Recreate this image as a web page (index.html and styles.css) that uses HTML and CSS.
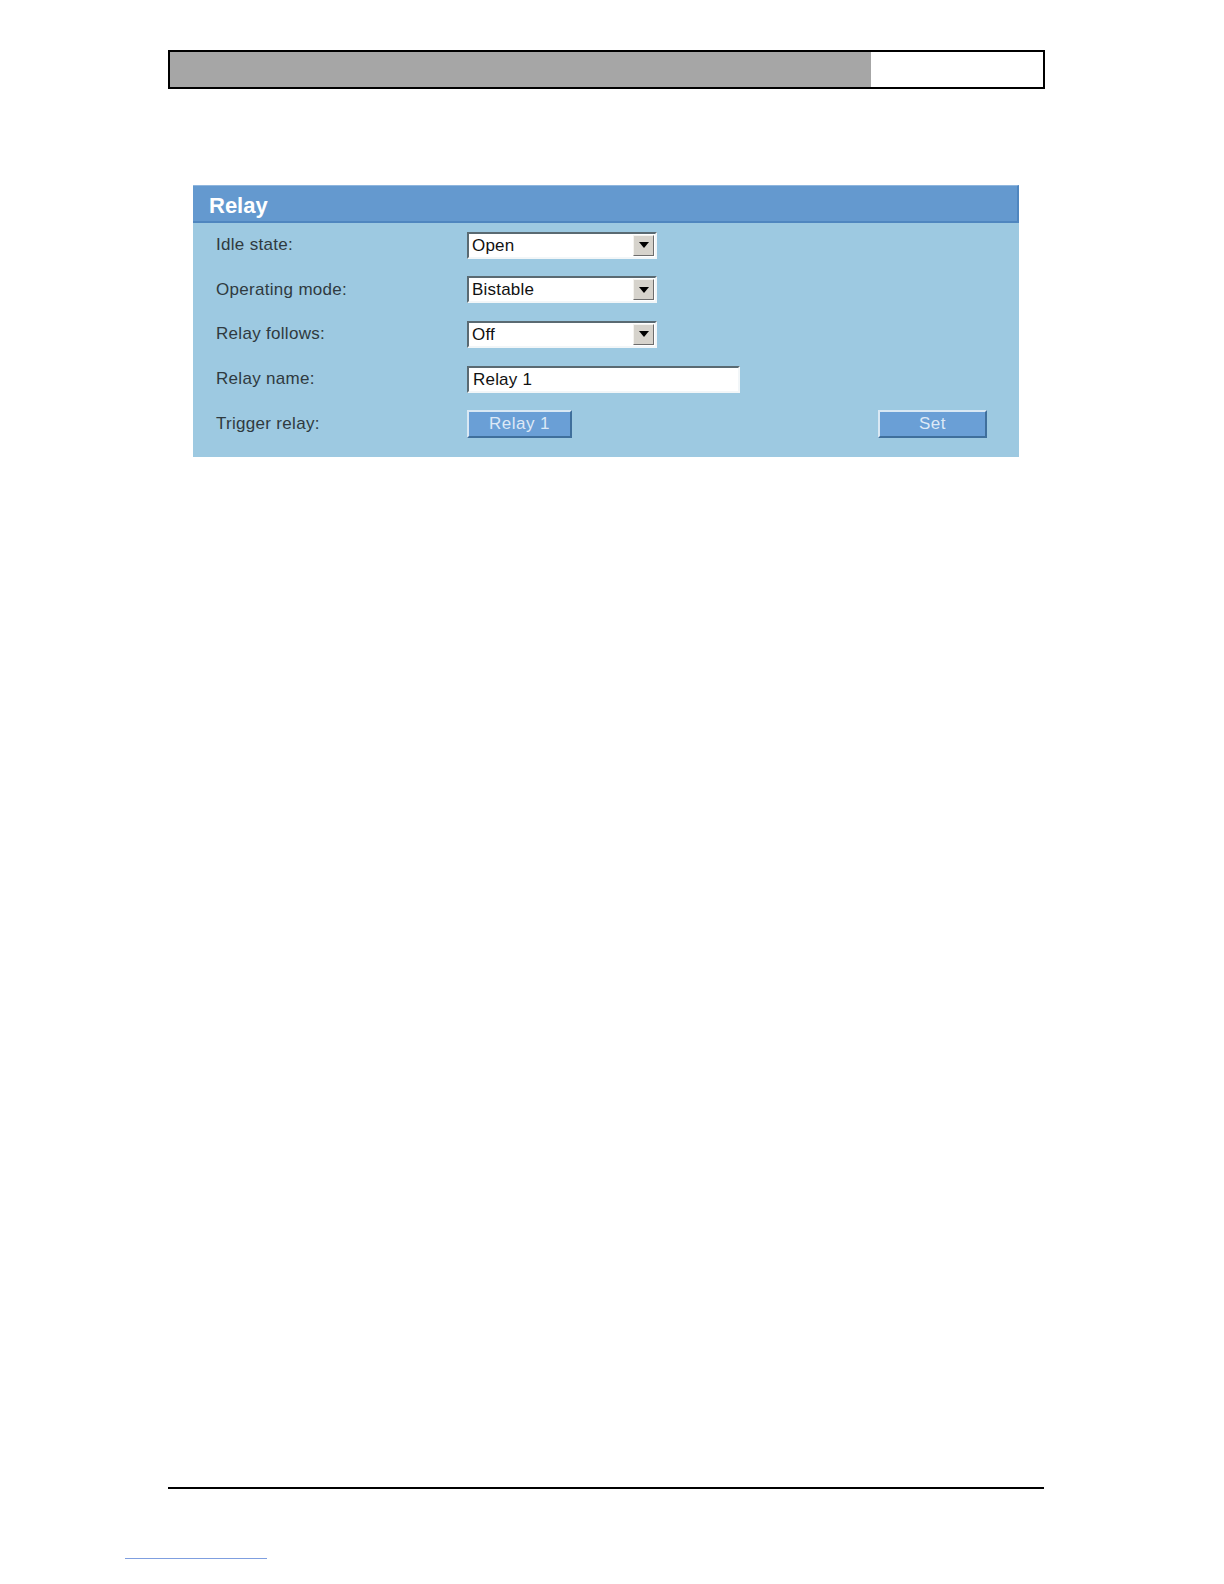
FILE: index.html
```html
<!DOCTYPE html>
<html>
<head>
<meta charset="utf-8">
<link rel="stylesheet" href="styles.css">
</head>
<body>
<div class="page">
  <div class="topbar"><div class="topbar-fill"></div><div class="topbar-blank"></div></div>
  <div class="panel">
    <div class="panel-head">Relay</div>
    <div class="panel-body">
      <div class="row">
        <div class="label">Idle state:</div>
        <div class="select"><span class="sel-text">Open</span><span class="sel-btn"><svg width="10" height="6" viewBox="0 0 10 6"><path d="M0 0H10L5 6Z" fill="#000"/></svg></span></div>
      </div>
      <div class="row">
        <div class="label">Operating mode:</div>
        <div class="select"><span class="sel-text">Bistable</span><span class="sel-btn"><svg width="10" height="6" viewBox="0 0 10 6"><path d="M0 0H10L5 6Z" fill="#000"/></svg></span></div>
      </div>
      <div class="row">
        <div class="label">Relay follows:</div>
        <div class="select"><span class="sel-text">Off</span><span class="sel-btn"><svg width="10" height="6" viewBox="0 0 10 6"><path d="M0 0H10L5 6Z" fill="#000"/></svg></span></div>
      </div>
      <div class="row">
        <div class="label">Relay name:</div>
        <div class="textinput">Relay 1</div>
      </div>
      <div class="row">
        <div class="label">Trigger relay:</div>
        <div class="btn btn-relay">Relay 1</div>
        <div class="spacer"></div>
        <div class="btn btn-set">Set</div>
      </div>
    </div>
  </div>
  <div class="footer-line"></div>
  <div class="link-line"></div>
</div>
</body>
</html>
```
FILE: styles.css
```css
html, body { margin: 0; padding: 0; background: #fff; overflow: hidden; }
body { font-family: "Liberation Sans", Arial, sans-serif; }
.page { width: 1224px; height: 1584px; padding-top: 50px; box-sizing: border-box; overflow: hidden; }
.topbar {
  margin-left: 168px; width: 877px; height: 39px; box-sizing: border-box;
  border: 2px solid #000; display: flex;
}
.topbar-fill { width: 701px; background: #a6a6a6; }
.topbar-blank { flex: 1; background: #fff; }
.panel { margin: 96px 0 0 193px; width: 826px; }
.panel-head {
  height: 38px; box-sizing: border-box; background: #6499cf;
  border-top: 1px solid #8fb6de; border-bottom: 2px solid #4f86bf; border-right: 2px solid #4f86bf;
  color: #fff; font-weight: bold; font-size: 22px; padding: 7px 0 0 16px; line-height: 25px;
}
.panel-body { background: #9dc9e1; padding: 0 32px 0 23px; height: 234px; box-sizing: border-box; }
.row { display: flex; align-items: center; height: 44.6px; }
.label { width: 251px; font-size: 17px; color: #2f3a40; letter-spacing: 0.3px; }
.select {
  width: 190px; height: 27px; box-sizing: border-box; display: flex; background: #fff;
  border: 2px solid; border-color: #5a6a72 #f2f6f8 #f2f6f8 #5a6a72;
}
.sel-text { flex: 1; font-size: 17px; color: #111; padding: 1px 0 0 3px; line-height: 21px; letter-spacing: 0.2px; }
.sel-btn {
  width: 21px; margin: 1px 1px 1px 0; box-sizing: border-box; background: #d6d3cc;
  border: 1px solid; border-color: #f4f3ef #6d6d6d #6d6d6d #f4f3ef;
  display: flex; align-items: center; justify-content: center;
}
.textinput {
  width: 273px; height: 27px; box-sizing: border-box; background: #fff;
  border: 2px solid; border-color: #5a6a72 #f2f6f8 #f2f6f8 #5a6a72;
  font-size: 17px; color: #111; padding: 1px 0 0 4px; line-height: 21px; letter-spacing: 0.2px;
}
.btn {
  height: 28px; box-sizing: border-box; background: #6a9fd6; color: #dde9f6;
  border: 2px solid; border-color: #d9e8f4 #3f6f9c #3f6f9c #d9e8f4;
  font-size: 17px; text-align: center; line-height: 24px; letter-spacing: 0.5px;
}
.btn-relay { width: 105px; }
.btn-set { width: 109px; }
.spacer { flex: 1; }
.footer-line { margin: 1030px 0 0 168px; width: 876px; height: 2px; background: #000; }
.link-line { margin: 69px 0 0 125px; width: 142px; height: 1px; background: #7f9fe0; }
```
